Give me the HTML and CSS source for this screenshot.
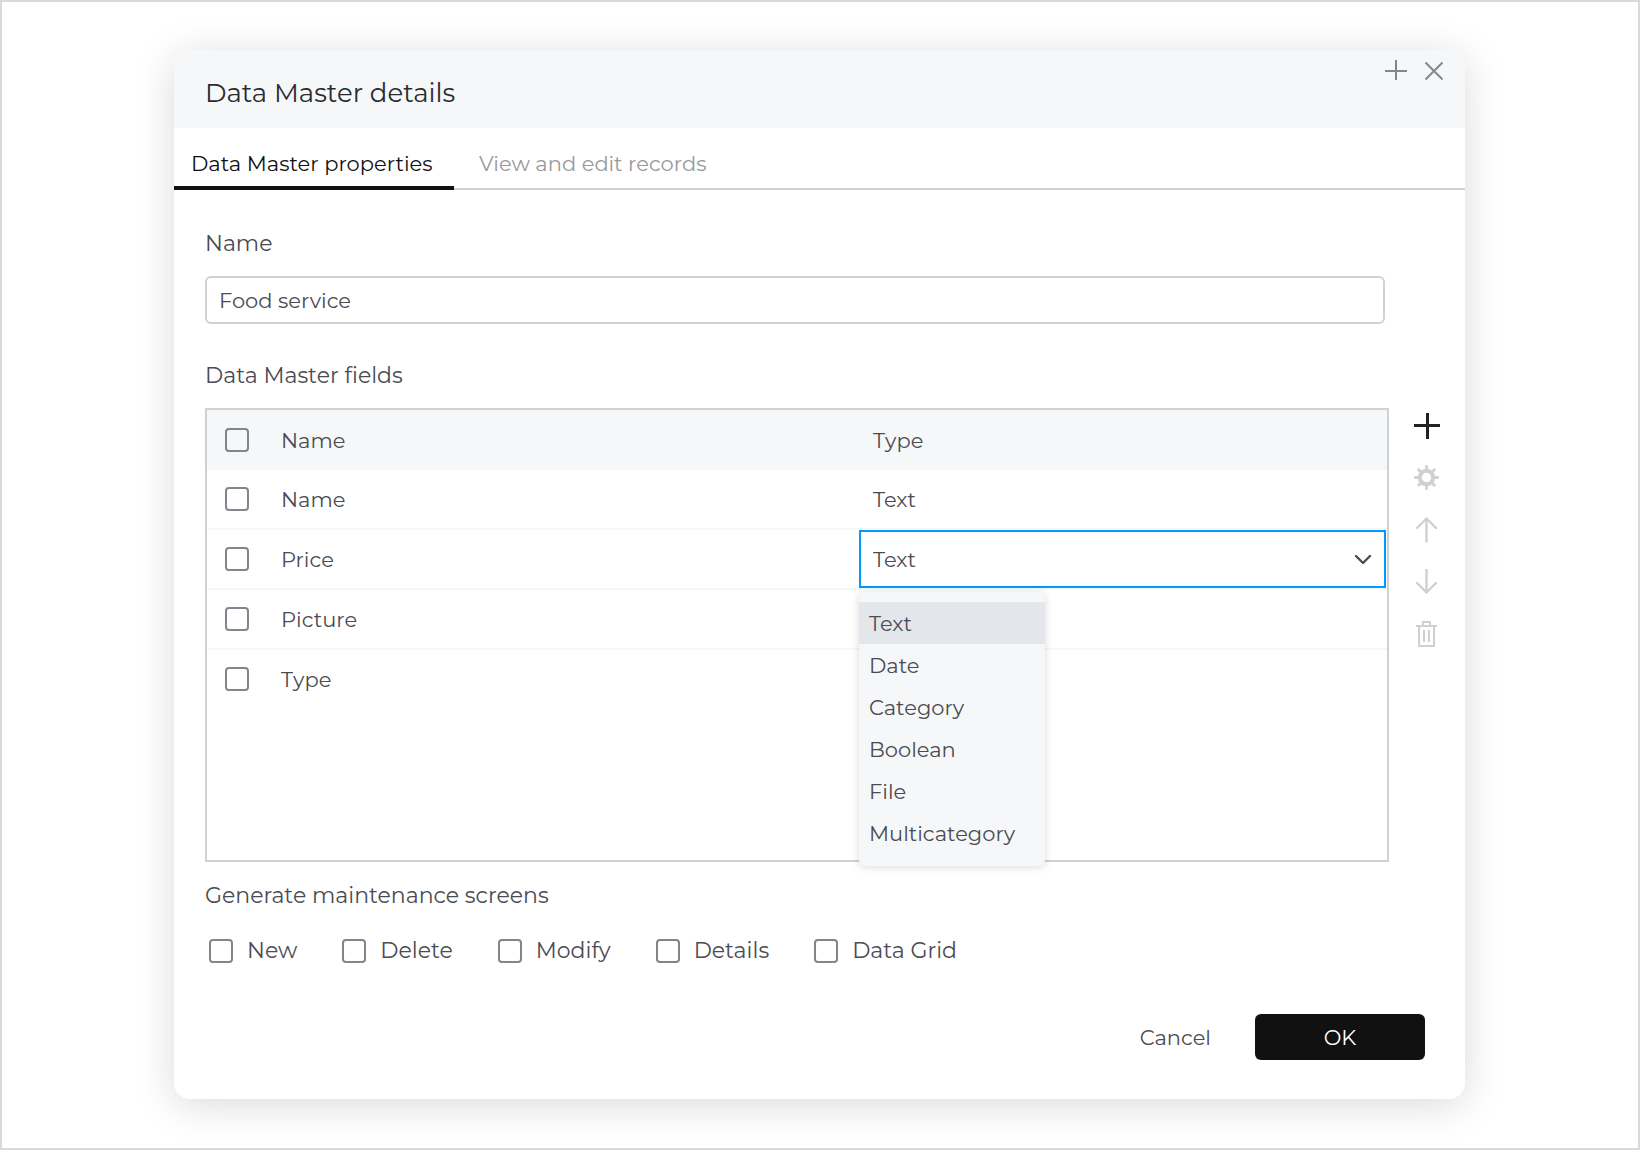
FILE: index.html
```html
<!DOCTYPE html>
<html lang="en">
<head>
<meta charset="utf-8">
<meta name="viewport" content="width=device-width, initial-scale=1">
<title>Data Master details</title>
<link rel="stylesheet" href="styles.css">
</head>
<body>
<div class="page">
  <section class="dialog" role="dialog" aria-labelledby="dialog-title">
    <header class="dialog-header">
      <h1 class="dialog-title" id="dialog-title">Data Master details</h1>
      <div class="window-actions">
        <button class="icon-button" type="button" aria-label="Maximize">
          <svg width="22" height="22" viewBox="0 0 22 22"><path d="M0 11h22M11 0v20" stroke="#80868b" stroke-width="2" fill="none"/></svg>
        </button>
        <button class="icon-button" type="button" aria-label="Close">
          <svg width="18" height="18" viewBox="0 0 18 18"><path d="M0.5 0.5l17 17M17.5 0.5l-17 17" stroke="#85888c" stroke-width="2" fill="none"/></svg>
        </button>
      </div>
    </header>
    <nav class="tabs">
      <a class="tab tab-active" href="#properties">Data Master properties</a>
      <a class="tab" href="#records">View and edit records</a>
    </nav>
    <form class="content">
      <label class="section-label" for="master-name">Name</label>
      <input class="text-input" id="master-name" type="text" value="Food service">
      <h2 class="section-label fields-label">Data Master fields</h2>
      <div class="fields">
        <div class="grid-box">
          <table class="grid">
            <thead>
              <tr>
                <th class="col-check"><input class="check" type="checkbox" aria-label="Select all"></th>
                <th>Name</th>
                <th class="col-type">Type</th>
              </tr>
            </thead>
            <tbody>
              <tr>
                <td class="col-check"><input class="check" type="checkbox" aria-label="Select Name"></td>
                <td>Name</td>
                <td class="col-type">Text</td>
              </tr>
              <tr>
                <td class="col-check"><input class="check" type="checkbox" aria-label="Select Price"></td>
                <td>Price</td>
                <td class="col-type type-editor">
                  <div class="select-box">
                    <select class="select" aria-label="Type of Price">
                      <option>Text</option>
                      <option>Date</option>
                      <option>Category</option>
                      <option>Boolean</option>
                      <option>File</option>
                      <option>Multicategory</option>
                    </select>
                    <svg class="chevron" width="18" height="12" viewBox="0 0 18 12"><path d="M2 2l7 7 7-7" stroke="#4b4b52" stroke-width="2.400" stroke-linecap="round" stroke-linejoin="round" fill="none"/></svg>
                    <ul class="menu" role="listbox" aria-label="Type">
                      <li class="menu-item menu-item-active" role="option" aria-selected="true">Text</li>
                      <li class="menu-item" role="option">Date</li>
                      <li class="menu-item" role="option">Category</li>
                      <li class="menu-item" role="option">Boolean</li>
                      <li class="menu-item" role="option">File</li>
                      <li class="menu-item" role="option">Multicategory</li>
                    </ul>
                  </div>
                </td>
              </tr>
              <tr>
                <td class="col-check"><input class="check" type="checkbox" aria-label="Select Picture"></td>
                <td>Picture</td>
                <td class="col-type"></td>
              </tr>
              <tr>
                <td class="col-check"><input class="check" type="checkbox" aria-label="Select Type"></td>
                <td>Type</td>
                <td class="col-type"></td>
              </tr>
            </tbody>
          </table>
        </div>
        <div class="tools">
          <button class="icon-button" type="button" aria-label="Add field">
            <svg width="28" height="28" viewBox="0 0 28 28"><path d="M1 14.500h26M14.500 2v26" stroke="#222" stroke-width="3" fill="none"/></svg>
          </button>
          <button class="icon-button" type="button" aria-label="Field settings">
            <svg width="26" height="26" viewBox="-12.500 -12.500 26 26" fill="none" stroke="#cfd0d2"><circle r="6.700" stroke-width="4"/><path d="M0-8.500V-11.200M0 8.500V11.200M-8.500 0H-11.200M8.500 0H11.200M-5.800-5.800L-7.800-7.800M5.800-5.800L7.800-7.800M-5.800 5.800L-7.800 7.800M5.800 5.800L7.800 7.800" stroke-width="2.800" stroke-linecap="round"/></svg>
          </button>
          <button class="icon-button" type="button" aria-label="Move up">
            <svg width="26" height="26" viewBox="0 0 26 26"><path d="M12.500 24.500V1.500M3 11l9.500-9.500 9.500 9.500" stroke="#cfd0d2" stroke-width="2.400" stroke-linecap="round" stroke-linejoin="round" fill="none"/></svg>
          </button>
          <button class="icon-button" type="button" aria-label="Move down">
            <svg width="26" height="26" viewBox="0 0 26 26"><path d="M12.500 0.500V23.500M3 14l9.500 9.500 9.500-9.500" stroke="#cfd0d2" stroke-width="2.400" stroke-linecap="round" stroke-linejoin="round" fill="none"/></svg>
          </button>
          <button class="icon-button" type="button" aria-label="Delete field">
            <svg width="26" height="26" viewBox="0 0 26 26"><path d="M2 5h21M9 5V1h7v4M5 5v20h15V5M10 9v12M15 9v12" stroke="#cfd0d2" stroke-width="2" fill="none"/></svg>
          </button>
        </div>
      </div>
      <fieldset class="screens">
        <legend class="section-label">Generate maintenance screens</legend>
        <div class="screen-options">
          <label class="screen-option"><input class="check" type="checkbox">New</label>
          <label class="screen-option"><input class="check" type="checkbox">Delete</label>
          <label class="screen-option"><input class="check" type="checkbox">Modify</label>
          <label class="screen-option"><input class="check" type="checkbox">Details</label>
          <label class="screen-option"><input class="check" type="checkbox">Data Grid</label>
        </div>
      </fieldset>
      <footer class="actions">
        <button class="button" type="button">Cancel</button>
        <button class="button button-primary" type="submit">OK</button>
      </footer>
    </form>
  </section>
</div>
</body>
</html>
```
FILE: styles.css
```css
* {
  box-sizing: border-box;
}

body {
  margin: 0;
  background: #fff;
  color: #4b4b52;
  font-family: Montserrat, Inter, sans-serif;
  font-size: 21px;
  line-height: 30px;
}

button,
input,
select {
  font: inherit;
  color: inherit;
}

.page {
  min-height: 100vh;
  padding: 48px 173px 48px 172px;
  border: 2px solid #d9d9d9;
}

.dialog {
  background: #fff;
  border-radius: 16px;
  box-shadow: 0 6px 40px rgba(0, 0, 0, 0.15);
}

.dialog-header {
  display: flex;
  justify-content: space-between;
  align-items: flex-start;
  height: 78px;
  padding: 10px 22px 0 31px;
  background: #f5f7f9;
  border-radius: 16px 16px 0 0;
}

.dialog-title {
  margin: 17px 0 0;
  color: #2b2b2e;
  font-size: 26px;
  font-weight: 400;
  line-height: 32px;
}

.window-actions {
  display: flex;
  align-items: center;
  gap: 18px;
}

.icon-button {
  display: flex;
  padding: 0;
  border: 0;
  background: none;
}

.tabs {
  display: flex;
  height: 62px;
  gap: 8px;
  box-shadow: inset 0 -2px #cdd2d6;
}

.tab {
  padding: 21px 17px 0;
  color: #999;
  text-decoration: none;
}

.tab-active {
  min-width: 280px;
  color: #111;
  border-bottom: 4px solid #111;
}

.content {
  padding: 39px 0 39px 31px;
}

.section-label {
  display: block;
  margin: 0;
  padding: 0;
  font-size: 22px;
  font-weight: 400;
  line-height: 30px;
}

.text-input {
  display: block;
  width: calc(100% - 80px);
  height: 48px;
  margin-top: 17px;
  padding: 0 12px;
  border: 2px solid #cdd2d6;
  border-radius: 6px;
  background: #fff;
}

.fields-label {
  margin-top: 37px;
}

.fields {
  display: grid;
  grid-template-columns: 1fr 76px;
  margin-top: 17px;
}

.grid-box {
  min-height: 454px;
  border: 2px solid #cdd2d6;
}

.grid {
  width: 100%;
  border-collapse: separate;
  border-spacing: 0;
  table-layout: fixed;
}

.grid th,
.grid td {
  height: 60px;
  padding: 2px 14px 0;
  font-weight: 400;
  text-align: left;
  vertical-align: middle;
}

.grid th {
  background: #f5f7f9;
}

.grid td {
  border-bottom: 2px solid #f6f7f8;
}

.grid tr:last-child td {
  border-bottom-color: transparent;
}

.grid .col-check {
  width: 60px;
  padding: 0 18px;
}

.grid .col-type {
  width: 528px;
}

.grid .type-editor {
  padding: 0 1px 0 0;
}

.check {
  display: block;
  flex: none;
  appearance: none;
  width: 24px;
  height: 24px;
  margin: 0;
  border: 2px solid #80868b;
  border-radius: 4px;
  background: transparent;
}

.select-box {
  position: relative;
}

.select {
  display: block;
  appearance: none;
  width: 100%;
  height: 58px;
  padding: 2px 12px 0;
  border: 2px solid #0099ff;
  border-radius: 0;
  background: #fff;
}

.chevron {
  position: absolute;
  top: 24px;
  right: 14px;
  pointer-events: none;
}

.menu {
  position: absolute;
  top: 62px;
  left: 0;
  width: 186px;
  margin: 0;
  padding: 10px 0 12px;
  border-radius: 6px;
  background: #f5f7f9;
  box-shadow: 0 1px 8px rgba(0, 0, 0, 0.15);
  list-style: none;
}

.menu-item {
  padding: 7px 10px 5px;
}

.menu-item-active {
  background: #e3e6eb;
}

.tools {
  display: flex;
  flex-direction: column;
  align-items: center;
  gap: 26px;
  padding-top: 3px;
}

.screens {
  margin: 19px 0 0;
  padding: 0;
  border: 0;
}

.screen-options {
  display: flex;
  flex-wrap: wrap;
  gap: 45px;
  padding: 25px 0 0 4px;
  font-size: 22px;
}

.screen-option {
  display: flex;
  align-items: center;
  gap: 14px;
}

.actions {
  display: flex;
  justify-content: flex-end;
  gap: 44px;
  margin-top: 48px;
  padding-right: 40px;
}

.button {
  height: 46px;
  padding: 2px 0 0;
  border: 0;
  border-radius: 6px;
  background: none;
}

.button-primary {
  width: 170px;
  background: #111;
  color: #fff;
}
```
